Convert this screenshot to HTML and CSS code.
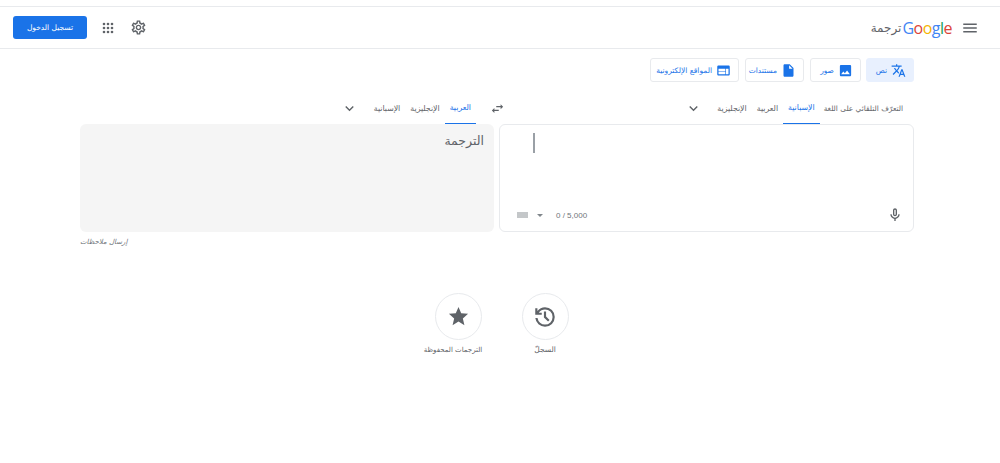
FILE: index.html
```html
<!DOCTYPE html>
<html lang="ar" dir="rtl">
<head>
    <meta charset="UTF-8">
    <title>ترجمة Google</title>
    <link rel="stylesheet" href="styles.css">
</head>
<body>
<header class="topbar">
    <div class="brand">
        <svg class="icon menu-icon" viewBox="0 0 24 24"><path d="M3 18h18v-2H3v2zm0-5h18v-2H3v2zm0-7v2h18V6H3z"/></svg>
        <span class="logo" dir="ltr"><span class="g-blue">G</span><span class="g-red">o</span><span class="g-yellow">o</span><span class="g-blue">g</span><span class="g-green">l</span><span class="g-red">e</span></span>
        <span class="product">ترجمة</span>
    </div>
    <div class="actions">
        <svg class="icon gear-icon" viewBox="0 0 24 24"><path d="M19.43 12.98c.04-.32.07-.64.07-.98 0-.34-.03-.66-.07-.98l2.11-1.65c.19-.15.24-.42.12-.64l-2-3.46c-.09-.16-.26-.25-.44-.25-.06 0-.12.01-.17.03l-2.49 1c-.52-.4-1.08-.73-1.69-.98l-.38-2.65C14.46 2.18 14.25 2 14 2h-4c-.25 0-.46.18-.49.42l-.38 2.65c-.61.25-1.17.59-1.69.98l-2.49-1c-.06-.02-.12-.03-.18-.03-.17 0-.34.09-.43.25l-2 3.46c-.13.22-.07.49.12.64l2.11 1.65c-.04.32-.07.65-.07.98 0 .33.03.66.07.98l-2.11 1.65c-.19.15-.24.42-.12.64l2 3.46c.09.16.26.25.44.25.06 0 .12-.01.17-.03l2.49-1c.52.4 1.08.73 1.69.98l.38 2.65c.03.24.24.42.49.42h4c.25 0 .46-.18.49-.42l.38-2.65c.61-.25 1.17-.59 1.69-.98l2.49 1c.06.02.12.03.18.03.17 0 .34-.09.43-.25l2-3.46c.12-.22.07-.49-.12-.64l-2.11-1.65zm-1.98-1.71c.04.31.05.52.05.73 0 .21-.02.43-.05.73l-.14 1.13.89.7 1.08.84-.7 1.21-1.27-.51-1.04-.42-.9.68c-.43.32-.84.56-1.25.73l-1.06.43-.16 1.13-.2 1.35h-1.4l-.19-1.35-.16-1.13-1.06-.43c-.43-.18-.83-.41-1.23-.71l-.91-.7-1.06.43-1.27.51-.7-1.21 1.08-.84.89-.7-.14-1.13c-.03-.31-.05-.54-.05-.74s.02-.43.05-.73l.14-1.13-.89-.7-1.08-.84.7-1.21 1.27.51 1.04.42.9-.68c.43-.32.84-.56 1.25-.73l1.06-.43.16-1.13.2-1.35h1.39l.19 1.35.16 1.13 1.06.43c.43.18.83.41 1.23.71l.91.7 1.06-.43 1.27-.51.7 1.21-1.07.85-.89.7.14 1.13zM12 8c-2.21 0-4 1.79-4 4s1.79 4 4 4 4-1.79 4-4-1.79-4-4-4zm0 6c-1.1 0-2-.9-2-2s.9-2 2-2 2 .9 2 2-.9 2-2 2z"/></svg>
        <svg class="icon apps-icon" viewBox="0 0 12 12">
            <circle cx="2" cy="2" r="1.3"/><circle cx="6" cy="2" r="1.3"/><circle cx="10" cy="2" r="1.3"/>
            <circle cx="2" cy="6" r="1.3"/><circle cx="6" cy="6" r="1.3"/><circle cx="10" cy="6" r="1.3"/>
            <circle cx="2" cy="10" r="1.3"/><circle cx="6" cy="10" r="1.3"/><circle cx="10" cy="10" r="1.3"/>
        </svg>
        <button class="signin">تسجيل الدخول</button>
    </div>
</header>

<main class="content">
    <nav class="modes">
        <button class="mode mode-active">
            <svg class="icon mode-icon" viewBox="0 0 24 24"><path d="M12.87 15.07l-2.54-2.51.03-.03c1.74-1.94 2.98-4.17 3.71-6.53H17V4h-7V2H8v2H1v1.99h11.17C11.5 7.92 10.44 9.75 9 11.35 8.07 10.32 7.3 9.19 6.69 8h-2c.73 1.63 1.73 3.17 2.98 4.56l-5.09 5.02L4 19l5-5 3.11 3.11.76-2.04zM18.5 10h-2L12 22h2l1.12-3h4.75L21 22h2l-4.5-12zm-2.62 7l1.62-4.33L19.12 17h-3.24z"/></svg>
            نص
        </button>
        <button class="mode mode-images">
            <svg class="icon mode-icon" viewBox="0 0 24 24"><path d="M21 19V5c0-1.1-.9-2-2-2H5c-1.1 0-2 .9-2 2v14c0 1.1.9 2 2 2h14c1.1 0 2-.9 2-2zM8.5 13.5l2.5 3.01L14.5 12l4.5 6H5l3.5-4.5z"/></svg>
            صور
        </button>
        <button class="mode mode-docs">
            <svg class="icon mode-icon" viewBox="0 0 24 24"><path d="M14 2H6c-1.1 0-1.99.9-1.99 2L4 20c0 1.1.89 2 1.99 2H18c1.1 0 2-.9 2-2V8l-6-6zm-1 7V3.5L18.5 9H13z"/></svg>
            مستندات
        </button>
        <button class="mode mode-web">
            <svg class="icon mode-icon" viewBox="0 0 24 24"><path d="M20 4H4c-1.1 0-2 .9-2 2v12c0 1.1.9 2 2 2h16c1.1 0 2-.9 2-2V6c0-1.1-.9-2-2-2zm-5 14H4v-4h11v4zm0-5H4V9h11v4zm5 5h-4V9h4v9z"/></svg>
            المواقع الإلكترونية
        </button>
    </nav>

    <div class="lang-row">
        <div class="lang-group lang-source">
            <span class="lang lang-detect">التعرّف التلقائي على اللغة</span>
            <span class="lang lang-active">الإسبانية</span>
            <span class="lang">العربية</span>
            <span class="lang">الإنجليزية</span>
            <svg class="icon chevron" viewBox="0 0 24 24"><path d="M7.41 8.59L12 13.17l4.59-4.58L18 10l-6 6-6-6 1.41-1.41z"/></svg>
        </div>
        <svg class="icon swap" viewBox="0 0 24 24"><path d="M6.99 11L3 15l3.99 4v-3H14v-2H6.99v-3zM21 9l-3.99-4v3H10v2h7.01v3L21 9z"/></svg>
        <div class="lang-group lang-target">
            <span class="lang lang-active">العربية</span>
            <span class="lang">الإنجليزية</span>
            <span class="lang">الإسبانية</span>
            <svg class="icon chevron" viewBox="0 0 24 24"><path d="M7.41 8.59L12 13.17l4.59-4.58L18 10l-6 6-6-6 1.41-1.41z"/></svg>
        </div>
    </div>

    <div class="panels">
        <section class="panel panel-source" dir="ltr">
            <div class="caret"></div>
            <div class="source-foot">
                <span class="keyboard"></span>
                <span class="dropdown"></span>
                <span class="count">0 / 5,000</span>
                <svg class="icon mic" viewBox="0 0 24 24"><path d="M12 14c1.66 0 3-1.34 3-3V5c0-1.66-1.34-3-3-3S9 3.34 9 5v6c0 1.66 1.34 3 3 3zm-1-9c0-.55.45-1 1-1s1 .45 1 1v6c0 .55-.45 1-1 1s-1-.45-1-1V5z"/><path d="M17 11c0 2.76-2.24 5-5 5s-5-2.24-5-5H5c0 3.53 2.61 6.43 6 6.92V21h2v-3.08c3.39-.49 6-3.39 6-6.92h-2z"/></svg>
            </div>
        </section>
        <section class="panel panel-target">الترجمة</section>
    </div>
    <div class="feedback">إرسال ملاحظات</div>
</main>

<div class="shortcuts">
    <div class="shortcut">
        <span class="circle"><svg class="icon history-icon" viewBox="0 0 24 24"><path d="M12 21q-3.45 0-6.012-2.288Q3.425 16.425 3.05 13h2.05q.35 2.6 2.313 4.3Q9.375 19 12 19q2.925 0 4.963-2.038Q19 14.925 19 12t-2.037-4.963Q14.925 5 12 5q-1.725 0-3.225.8T6.25 8H9v2H3V4h2v2.35q1.275-1.6 3.113-2.475Q9.95 3 12 3q3.75 0 6.375 2.625T21 12q0 3.75-2.625 6.375T12 21Zm2.8-4.8L11 12.4V7h2v4.6l3.2 3.2Z"/></svg></span>
        <span class="shortcut-label">السجلّ</span>
    </div>
    <div class="shortcut">
        <span class="circle"><svg class="icon star-icon" viewBox="0 0 24 24"><path d="M12 17.27L18.18 21l-1.64-7.03L22 9.24l-7.19-.61L12 2 9.19 8.63 2 9.24l5.46 4.73L5.82 21z"/></svg></span>
        <span class="shortcut-label shortcut-label-saved">الترجمات المحفوظة</span>
    </div>
</div>
</body>
</html>
```

FILE: styles.css
```css
* {
    box-sizing: border-box;
}

body {
    margin: 0;
    padding-top: 6px;

    font-family: "DejaVu Sans", sans-serif;
    color: #5f6368;
    background: #fff;
}

.icon {
    display: block;
    flex: none;

    width: 20px;
    height: 20px;

    fill: #5f6368;
}

/* top bar */
.topbar {
    display: flex;
    align-items: center;
    justify-content: space-between;

    height: 43px;
    padding: 0 21px 0 13px;

    border-top: 1px solid #e8eaed;
    border-bottom: 1px solid #e8eaed;
}

.brand {
    display: flex;
    align-items: center;
}

.menu-icon {
    width: 18px;
    height: 18px;
    margin-left: 9px;
}

.logo {
    font-family: "Open Sans", sans-serif;
    font-size: 16px;
    letter-spacing: -.5px;
}

.g-blue { color: #4285f4; }
.g-red { color: #db4437; }
.g-yellow { color: #f4b400; }
.g-green { color: #0f9d58; }

.product {
    margin-right: 1px;

    font-size: 12px;
}

.actions {
    display: flex;
    align-items: center;
}

.gear-icon {
    width: 17px;
    height: 17px;
}

.apps-icon {
    width: 12px;
    height: 12px;
    margin-right: 15.5px;
}

.signin {
    width: 74px;
    height: 23px;
    margin-right: 15px;
    padding: 0;

    font-family: inherit;
    font-size: 7.5px;
    color: #fff;

    border: 0;
    border-radius: 3px;
    background: #1a73e8;
}

/* main block */
.content {
    margin: 0 86px 0 80px;
}

.modes {
    display: flex;
    gap: 5px;

    padding-top: 9px;
}

.mode {
    display: flex;
    align-items: center;
    gap: 4px;

    height: 24px;
    padding: 0 7px;

    font-family: inherit;
    font-size: 7.5px;
    white-space: nowrap;
    color: #1a73e8;

    border: 1px solid #e8eaed;
    border-radius: 3px;
    background: #fff;
}

.mode-active {
    width: 48px;

    border-color: #e8f0fe;
    background: #e8f0fe;
}

.mode-images { width: 51px; margin-left: 1px; }
.mode-docs { width: 59px; margin-left: 1px; }
.mode-web { width: 89px; }

.mode-icon {
    width: 15px;
    height: 15px;

    fill: #1a73e8;
}

.lang-row {
    display: flex;
    align-items: flex-end;

    height: 42px;
}

.lang-group {
    display: flex;
    align-items: center;

    height: 28px;
}

.lang-source {
    flex: none;

    width: 402px;
    padding-right: 6px;
}

.lang-target {
    flex: 1 1 0;

    padding-right: 6px;
}

.lang {
    display: flex;
    align-items: center;

    height: 28px;
    padding: 0 5px 4px;

    font-size: 7.8px;
    color: #5f6368;
}

.lang-detect {
    padding-left: 4px;

    font-size: 7.4px;
}

.lang-active {
    color: #1a73e8;
    border-bottom: 1px solid #1a73e8;
}

.chevron {
    width: 17px;
    height: 17px;
    margin: 0 10.5px 4px 0;
}

.swap {
    width: 15px;
    height: 15px;
    margin: 0 7px 8px 8px;
}

.panels {
    display: flex;
    gap: 5px;

    height: 108px;
}

.panel {
    border-radius: 6px;
}

.panel-source {
    display: flex;
    flex: none;
    flex-direction: column;
    justify-content: space-between;

    width: 415px;
    padding: 8px 10px 8px 17px;

    border: 1px solid #e8eaed;
}

.caret {
    width: 2px;
    height: 20px;
    margin-left: 16px;

    background: #9aa0a6;
}

.source-foot {
    display: flex;
    align-items: center;
}

.keyboard {
    width: 11px;
    height: 6px;

    background: #c4c7c9;
}

.dropdown {
    width: 0;
    height: 0;
    margin-left: 9px;

    border-top: 3px solid #80868b;
    border-right: 3px solid transparent;
    border-left: 3px solid transparent;
}

.count {
    flex: 1;
    margin-left: 13px;

    font-family: "Liberation Sans", sans-serif;
    font-size: 8px;
    color: #70757a;
}

.mic {
    width: 16px;
    height: 16px;
}

.panel-target {
    flex: 1;

    padding: 9px 10px;

    font-size: 12.5px;
    color: #5f6368;

    background: #f5f5f5;
}

.feedback {
    margin-top: 6px;

    font-size: 7px;
    font-style: italic;
    text-align: left;
    color: #70757a;
}

/* history and saved */
.shortcuts {
    display: flex;
    justify-content: center;

    margin-top: 47px;
    padding-left: 3px;
}

.shortcut {
    display: flex;
    flex-direction: column;
    align-items: center;

    width: 87px;
}

.circle {
    display: flex;
    align-items: center;
    justify-content: center;

    width: 47px;
    height: 47px;

    border: 1px solid #e8eaed;
    border-radius: 50%;
}

.history-icon {
    width: 26px;
    height: 26px;
}

.star-icon {
    width: 23px;
    height: 23px;
}

.shortcut-label {
    margin-top: 5px;

    font-size: 7.5px;
    line-height: 10px;
    white-space: nowrap;
    color: #5f6368;
}

.shortcut-label-saved {
    padding-right: 10px;

    font-size: 7px;
}
```
